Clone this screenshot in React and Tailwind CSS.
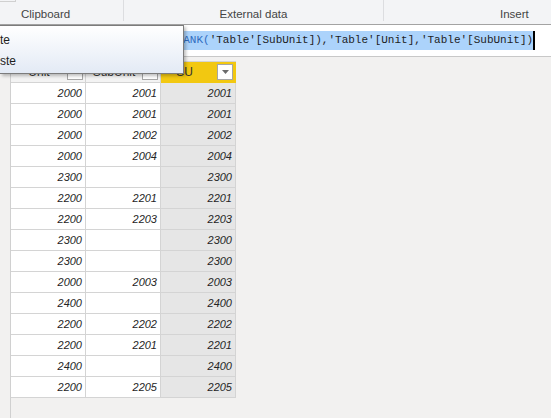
const ROWS = [
  ['2000', '2001', '2001'],
  ['2000', '2001', '2001'],
  ['2000', '2002', '2002'],
  ['2000', '2004', '2004'],
  ['2300', '', '2300'],
  ['2200', '2201', '2201'],
  ['2200', '2203', '2203'],
  ['2300', '', '2300'],
  ['2300', '', '2300'],
  ['2000', '2003', '2003'],
  ['2400', '', '2400'],
  ['2200', '2202', '2202'],
  ['2200', '2201', '2201'],
  ['2400', '', '2400'],
  ['2200', '2205', '2205'],
];

function FilterBox({ arrow }) {
  return (
    <div className="w-[16px] h-[16px] bg-white border border-[#a6a6a6] flex items-center justify-center shrink-0">
      {arrow && (
        <svg width="7" height="4" viewBox="0 0 7 4">
          <path d="M0 0h7L3.5 4z" fill="#6b6b6b" />
        </svg>
      )}
    </div>
  );
}

function HeaderCell({ label, active }) {
  return (
    <div
      className={`h-[21px] flex items-center pr-[2px] border-r border-b ${
        active ? 'bg-[#f2c811] border-[#f2c811]' : 'bg-[#f3f3f3] border-[#d4d4d4]'
      }`}
    >
      <span className={`flex-1 text-center text-[12px] text-[#333] ${active ? 'pr-[9px]' : ''}`}>{label}</span>
      <FilterBox arrow={active} />
    </div>
  );
}

export default function App() {
  return (
    <div className="relative w-[551px] h-[418px] overflow-hidden bg-[#f2f1f0] font-['Liberation_Sans',sans-serif]">
      {/* Ribbon group labels */}
      <div className="h-[25px] bg-[#f3f4f6] border-b border-[#a3a3a3] flex text-[11.5px] text-[#444]">
        <div className="relative w-[124px] h-[21px] border-r border-[#dcdde0] pl-[21px] pt-[7px] leading-[14px]">
          <div className="absolute left-0 top-0 w-[16px] h-[2px] border-b border-r border-[#d0d0d0]" />
          Clipboard
        </div>
        <div className="w-[260px] h-[21px] border-r border-[#dcdde0] text-center pt-[7px] leading-[14px]">
          External data
        </div>
        <div className="flex-1 pl-[116px] pt-[7px] leading-[14px]">Insert</div>
      </div>

      {/* Formula bar */}
      <div className="h-[32px] bg-white border-b border-[#c8c8c8] flex items-center pl-[104px] pb-[1px]">
        <span className="bg-[#acd3fb] leading-[19px] text-[11px] font-['Liberation_Mono',monospace] text-[#1e1e1e] whitespace-pre">
          SU = <span className="text-[#2f6cc0]">IF(ISBLANK(</span>'Table'[SubUnit]),'Table'[Unit],'Table'[SubUnit])
        </span>
        <span className="w-[2px] h-[19px] bg-black" />
      </div>

      {/* Data view */}
      <div className="flex h-full">
        <div className="w-[11px] shrink-0 border-r border-[#d0d0d0] h-full" />
        <div className="pt-[4px]">
          <div className="grid grid-cols-[75px_75px_75px] border-t border-[#d4d4d4] w-[225px]">
            <HeaderCell label="Unit" />
            <HeaderCell label="SubUnit" />
            <HeaderCell label="SU" active />
            {ROWS.map((r, i) =>
              r.map((v, j) => (
                <div
                  key={`${i}-${j}`}
                  className={`h-[21px] border-r border-b border-[#d4d4d4] pr-[3px] text-right italic text-[11px] leading-[20px] text-[#252525] ${
                    j === 2 ? 'bg-[#e6e6e6]' : 'bg-white'
                  }`}
                >
                  {v}
                </div>
              ))
            )}
          </div>
        </div>
      </div>

      {/* Context menu overlay */}
      <div className="absolute left-0 top-[25px] w-[184px] h-[49px] border border-l-0 border-[#7c7c7c] bg-gradient-to-b from-white to-[#e3eaf5] shadow-[2px_2px_3px_rgba(0,0,0,0.25)] text-[12px] text-[#1e1e1e] overflow-hidden">
        <div className="h-[24px] flex items-center pt-[3px]">te</div>
        <div className="h-[22px] flex items-center">ste</div>
      </div>
    </div>
  );
}
